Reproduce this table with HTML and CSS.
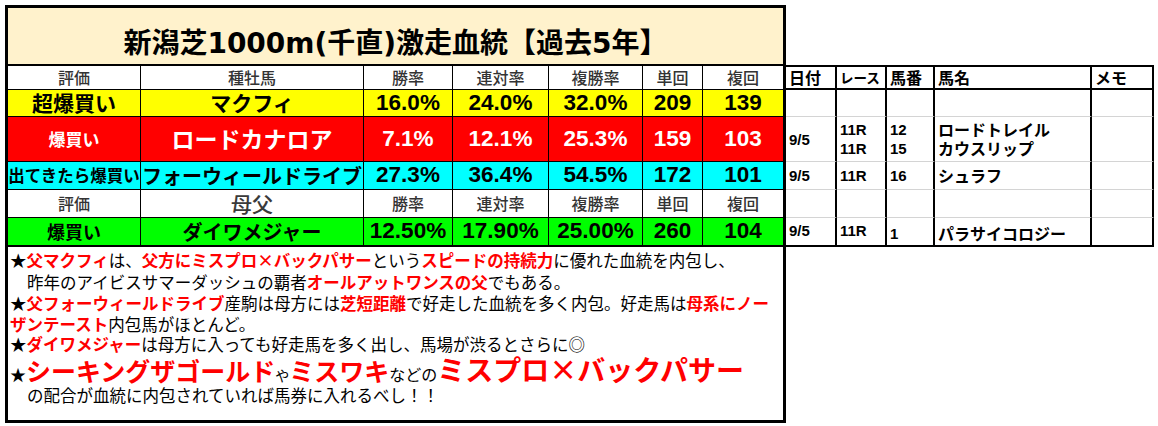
FILE: index.html
```html
<!DOCTYPE html>
<html lang="ja">
<head>
<meta charset="utf-8">
<title>新潟芝1000m(千直)激走血統</title>
<link rel="stylesheet" href="styles.css">
</head>
<body>
<div class="page">
  <section class="sheet">
    <h1 class="title">新潟芝1000m(千直)激走血統【過去5年】</h1>
    <div class="grid">
      <div class="cell hd">評価</div>
      <div class="cell hd">種牡馬</div>
      <div class="cell hd">勝率</div>
      <div class="cell hd">連対率</div>
      <div class="cell hd">複勝率</div>
      <div class="cell hd">単回</div>
      <div class="cell hd">複回</div>

      <div class="cell y jp rank-y">超爆買い</div>
      <div class="cell y jp name-y">マクフィ</div>
      <div class="cell y num">16.0%</div>
      <div class="cell y num">24.0%</div>
      <div class="cell y num">32.0%</div>
      <div class="cell y num">209</div>
      <div class="cell y num">139</div>

      <div class="cell r jp rank-r">爆買い</div>
      <div class="cell r jp name-r">ロードカナロア</div>
      <div class="cell r num">7.1%</div>
      <div class="cell r num">12.1%</div>
      <div class="cell r num">25.3%</div>
      <div class="cell r num">159</div>
      <div class="cell r num">103</div>

      <div class="cell c jp rank-c">出てきたら爆買い</div>
      <div class="cell c jp name-c">フォーウィールドライブ</div>
      <div class="cell c num">27.3%</div>
      <div class="cell c num">36.4%</div>
      <div class="cell c num">54.5%</div>
      <div class="cell c num">172</div>
      <div class="cell c num">101</div>

      <div class="cell hd">評価</div>
      <div class="cell hd hd-big">母父</div>
      <div class="cell hd">勝率</div>
      <div class="cell hd">連対率</div>
      <div class="cell hd">複勝率</div>
      <div class="cell hd">単回</div>
      <div class="cell hd">複回</div>

      <div class="cell g jp rank-g end">爆買い</div>
      <div class="cell g jp name-g end">ダイワメジャー</div>
      <div class="cell g num end">12.50%</div>
      <div class="cell g num end">17.90%</div>
      <div class="cell g num end">25.00%</div>
      <div class="cell g num end">260</div>
      <div class="cell g num end">104</div>
    </div>
    <div class="notes">
      <div class="ln l1">★<span class="red">父マクフィ</span>は、<span class="red">父方にミスプロ×バックパサー</span>という<span class="red">スピードの持続力</span>に優れた血統を内包し、</div>
      <div class="ln l2 in">昨年のアイビスサマーダッシュの覇者<span class="red">オールアットワンスの父</span>でもある。</div>
      <div class="ln l3">★<span class="red">父フォーウィールドライブ</span>産駒は母方には<span class="red">芝短距離</span>で好走した血統を多く内包。好走馬は<span class="red">母系にノー</span></div>
      <div class="ln l4"><span class="red">ザンテースト</span>内包馬がほとんど。</div>
      <div class="ln l5">★<span class="red">ダイワメジャー</span>は母方に入っても好走馬を多く出し、馬場が渋るとさらに◎</div>
      <div class="ln l6"><span class="star">★</span><span class="red big1">シーキングザゴールド</span><span class="sm">や</span><span class="red big1">ミスワキ</span><span class="mid">などの</span><span class="red big2">ミスプロ×バックパサー</span></div>
      <div class="ln l7 in">の配合が血統に内包されていれば馬券に入れるべし！！</div>
    </div>
  </section>

  <section class="log">
    <div class="lc lh">日付</div>
    <div class="lc lh lh-sm">レース</div>
    <div class="lc lh">馬番</div>
    <div class="lc lh">馬名</div>
    <div class="lc lh">メモ</div>

    <div class="lc"></div>
    <div class="lc"></div>
    <div class="lc"></div>
    <div class="lc"></div>
    <div class="lc"></div>

    <div class="lc">9/5</div>
    <div class="lc two">11R<br>11R</div>
    <div class="lc two">12<br>15</div>
    <div class="lc two jpn">ロードトレイル<br>カウスリップ</div>
    <div class="lc"></div>

    <div class="lc">9/5</div>
    <div class="lc">11R</div>
    <div class="lc">16</div>
    <div class="lc jpn">シュラフ</div>
    <div class="lc"></div>

    <div class="lc"></div>
    <div class="lc"></div>
    <div class="lc"></div>
    <div class="lc"></div>
    <div class="lc"></div>

    <div class="lc last up">9/5</div>
    <div class="lc last up">11R</div>
    <div class="lc last down">1</div>
    <div class="lc last jpn down">パラサイコロジー</div>
    <div class="lc last"></div>
  </section>
</div>
</body>
</html>
```

FILE: styles.css
```css
* { box-sizing: border-box; }

body {
  margin: 0;
  padding: 5px;
  background: #fff;
  color: #000;
  font-family: "Noto Sans CJK JP", sans-serif;
}

.page {
  display: flex;
  align-items: flex-start;
}

/* left sheet */
.sheet {
  width: 781px;
  border: 3px solid #000;
}

.title {
  margin: 0;
  height: 58px;
  background: #FFF2CC;
  border-bottom: 2px solid #000;
  display: flex;
  align-items: flex-end;
  justify-content: center;
  padding: 0 0 6px 0;
  font: 700 28px/28px "DejaVu Sans", "Noto Sans CJK JP", sans-serif;
  white-space: nowrap;
}

.grid {
  display: grid;
  grid-template-columns: 133px 223px 89px 96px 94px 60px 80px;
  grid-template-rows: 24px 27px 45px 28px 28px 29px;
}

.cell {
  display: flex;
  align-items: center;
  justify-content: center;
  border-right: 1px solid #000;
  border-bottom: 1px solid #000;
  white-space: nowrap;
  line-height: 1.1;
}
.cell:nth-child(7n) { border-right: 0; }
.cell.end { border-bottom-width: 2px; }

.hd {
  background: #fff;
  color: #333;
  font-size: 16px;
  font-weight: 500;
}
.hd-big { font-size: 21px; color: #3a3a3a; }

.y { background: #FFFF00; }
.r { background: #FF0000; color: #fff; }
.c { background: #00FFFF; }
.g { background: #00FF00; }

.jp { font-weight: 700; }
.rank-y { font-size: 21px; }
.name-y { font-size: 21px; }
.rank-r { font-size: 17px; }
.name-r { font-size: 23px; }
.rank-c { font-size: 16.5px; }
.name-c { font-size: 20px; }
.rank-g { font-size: 18px; }
.name-g { font-size: 20px; }

.num {
  font-family: "Liberation Sans", Arial, sans-serif;
  font-weight: 700;
  font-size: 22.5px;
}

/* notes */
.notes {
  height: 173px;
  padding: 2px 0 0 2px;
  font-size: 16.5px;
  font-weight: 400;
}
.ln {
  white-space: nowrap;
}
.l1 { height: 22px; line-height: 22px; }
.l2 { height: 22px; line-height: 22px; }
.l3 { height: 21px; line-height: 21px; }
.l4 { height: 20px; line-height: 20px; }
.l5 { height: 21px; line-height: 21px; }
.l6 { height: 29px; line-height: 29px; }
.l7 { height: 22px; line-height: 22px; }
.in { padding-left: 17px; }

.red { color: #FF0000; font-weight: 700; }
.star { font-size: 16px; }
.sm { font-size: 14px; }
.mid { font-size: 16px; }
.big1 { font-size: 25px; }
.big2 { font-size: 28px; }

/* right log table */
.log {
  margin-top: 60px;
  width: 368px;
  display: grid;
  grid-template-columns: 51px 50px 48px 157px 62px;
  grid-template-rows: 25px 27px 45px 28px 28px 29px;
}

.lc {
  display: flex;
  align-items: center;
  padding-left: 3px;
  border-right: 2px solid #000;
  border-bottom: 1px solid #d4d4d4;
  font: 700 15px/19px "Liberation Sans", Arial, sans-serif;
  white-space: nowrap;
}
.lh {
  border-top: 2px solid #000;
  border-bottom: 2px solid #000;
  font: 700 16px/1.1 "Noto Sans CJK JP", sans-serif;
}
.lh-sm { font-size: 13.5px; }
.lc.last { border-bottom: 2px solid #000; }
.jpn {
  font-family: "Noto Sans CJK JP", sans-serif;
  font-size: 16px;
  font-weight: 700;
  line-height: 19px;
}
.up { padding-bottom: 3px; }
.down { padding-top: 4px; }
```
